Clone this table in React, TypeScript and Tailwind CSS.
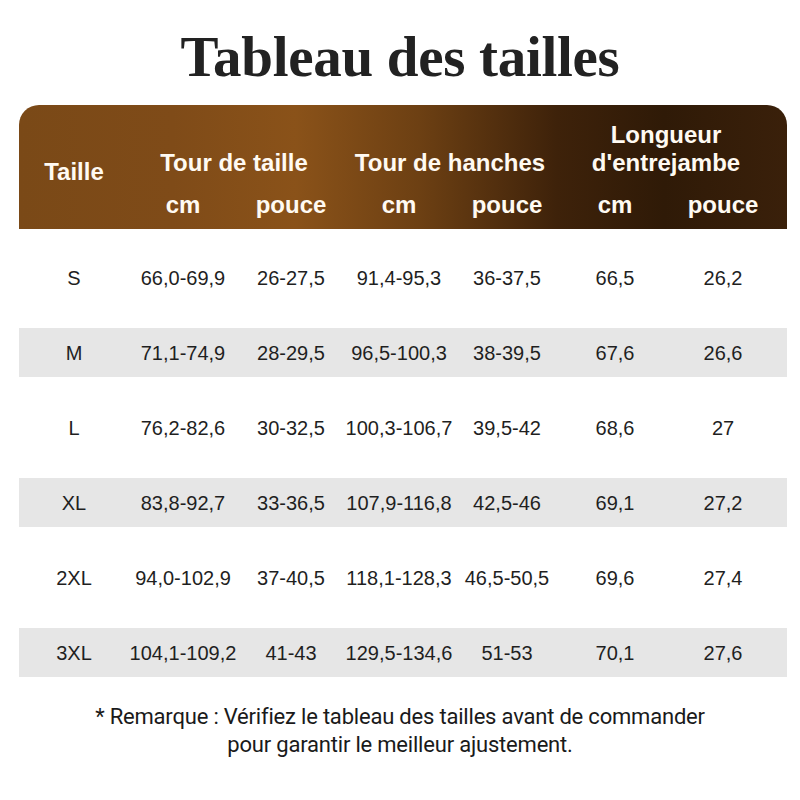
import React from 'react';

type Row = {
  size: string;
  waistCm: string;
  waistIn: string;
  hipCm: string;
  hipIn: string;
  inseamCm: string;
  inseamIn: string;
};

const ROWS: Row[] = [
  { size: 'S', waistCm: '66,0-69,9', waistIn: '26-27,5', hipCm: '91,4-95,3', hipIn: '36-37,5', inseamCm: '66,5', inseamIn: '26,2' },
  { size: 'M', waistCm: '71,1-74,9', waistIn: '28-29,5', hipCm: '96,5-100,3', hipIn: '38-39,5', inseamCm: '67,6', inseamIn: '26,6' },
  { size: 'L', waistCm: '76,2-82,6', waistIn: '30-32,5', hipCm: '100,3-106,7', hipIn: '39,5-42', inseamCm: '68,6', inseamIn: '27' },
  { size: 'XL', waistCm: '83,8-92,7', waistIn: '33-36,5', hipCm: '107,9-116,8', hipIn: '42,5-46', inseamCm: '69,1', inseamIn: '27,2' },
  { size: '2XL', waistCm: '94,0-102,9', waistIn: '37-40,5', hipCm: '118,1-128,3', hipIn: '46,5-50,5', inseamCm: '69,6', inseamIn: '27,4' },
  { size: '3XL', waistCm: '104,1-109,2', waistIn: '41-43', hipCm: '129,5-134,6', hipIn: '51-53', inseamCm: '70,1', inseamIn: '27,6' },
];

// header group: title (one or two lines) over cm / pouce
const Group: React.FC<{ lines: string[] }> = ({ lines }) => (
  <div className="w-[216px] flex flex-col justify-end pb-[10px]">
    <div className="flex flex-col items-center pr-[6px]">
      {lines.map((l) => (
        <span key={l} className="leading-[28px]">{l}</span>
      ))}
    </div>
    <div className="flex mt-[14px] leading-[28px]">
      <span className="w-[108px] text-center">cm</span>
      <span className="w-[108px] text-center">pouce</span>
    </div>
  </div>
);

export default function App() {
  return (
    <div className="w-[800px] h-[800px] bg-white text-[#222] font-['Liberation_Sans',Arial,sans-serif]">
      {/* Title */}
      <div className="h-[105px] pt-[27px] text-center">
        <h1 className="font-['Liberation_Serif','Times_New_Roman',serif] font-bold text-[57px] leading-[60px] tracking-[-0.3px] text-[#222]">
          Tableau des tailles
        </h1>
      </div>

      <div className="mx-[19px] w-[768px]">
        {/* Header band */}
        <div className="h-[124px] rounded-t-[20px] flex text-[24px] font-bold text-[#fffaf2] bg-[linear-gradient(90deg,#7a4917_0%,#7f4b18_20%,#8a5219_36%,#6d4013_52%,#3e220a_70%,#2f1a07_84%,#3a200a_100%)]">
          <div className="w-[110px] flex items-center justify-center pt-[10px]">Taille</div>
          <Group lines={['Tour de taille']} />
          <Group lines={['Tour de hanches']} />
          <Group lines={['Longueur', "d'entrejambe"]} />
        </div>

        {/* Body */}
        <div className="pt-[11px] text-[20px] text-[#1f1f1f]">
          {ROWS.map((r, i) => (
            <div key={r.size} className="py-[13px]">
              <div className={`h-[49px] flex items-center ${i % 2 === 1 ? 'bg-[#e6e6e6]' : ''}`}>
                <span className="w-[110px] text-center">{r.size}</span>
                <span className="w-[108px] text-center">{r.waistCm}</span>
                <span className="w-[108px] text-center">{r.waistIn}</span>
                <span className="w-[108px] text-center">{r.hipCm}</span>
                <span className="w-[108px] text-center">{r.hipIn}</span>
                <span className="w-[108px] text-center">{r.inseamCm}</span>
                <span className="w-[108px] text-center">{r.inseamIn}</span>
              </div>
            </div>
          ))}
        </div>
      </div>

      {/* Note */}
      <div className="mt-[13px] text-center font-['Roboto',sans-serif] text-[22px] leading-[28px] tracking-[-0.2px] text-[#1a1a1a]">
        <p>* Remarque : Vérifiez le tableau des tailles avant de commander</p>
        <p>pour garantir le meilleur ajustement.</p>
      </div>
    </div>
  );
}
